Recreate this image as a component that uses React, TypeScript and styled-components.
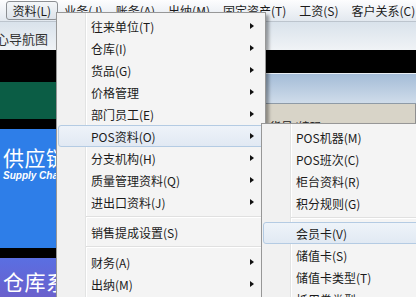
import React from 'react';
import styled, { createGlobalStyle } from 'styled-components';

const Global = createGlobalStyle`
  html, body { margin: 0; padding: 0; width: 416px; height: 297px; overflow: hidden; background: #ffffff; }
  body { font-family: "Noto Sans CJK SC", "Noto Sans", sans-serif; font-size: 12px; color: #1b1b1b; }
`;

const Screen = styled.div`
  position: relative;
  width: 416px;
  height: 297px;
  overflow: hidden;
  display: flex;
  flex-direction: column;
`;

const MenuBar = styled.div`
  height: 22px;
  flex: none;
  box-sizing: border-box;
  display: flex;
  align-items: center;
  padding-left: 6px;
  background: linear-gradient(#fdfdfe, #e2e8ef);
  border-bottom: 1px solid #bcc4cd;
  white-space: nowrap;
  overflow: hidden;
`;

const BarItem = styled.div<{ $open?: boolean }>`
  height: 19px;
  flex: none;
  box-sizing: border-box;
  padding: 0 5.5px;
  display: flex;
  align-items: center;
  white-space: nowrap;
  border: 1px solid ${(p) => (p.$open ? '#8c8f93' : 'transparent')};
  border-radius: 3px;
  background: ${(p) => (p.$open ? 'linear-gradient(#f4f6f8, #dde3ea)' : 'transparent')};
`;

const TitleBand = styled.div`
  height: 28px;
  flex: none;
  display: flex;
  align-items: center;
  padding-top: 4px;
  box-sizing: border-box;
  overflow: hidden;
  background: linear-gradient(#d9e2eb, #f0f3f6);
  font-size: 13px;
  color: #333;
  white-space: nowrap;
`;

const TitleText = styled.span`
  margin-left: -17px;
`;

const Body = styled.div`
  flex: 1;
  display: flex;
  min-height: 0;
`;

const Nav = styled.div`
  width: 170px;
  flex: none;
  background: #000;
  padding-top: 32px;
  display: flex;
  flex-direction: column;
  gap: 10px;
  box-sizing: border-box;
`;

const Tile = styled.div<{ $bg: string; $h?: number }>`
  ${(p) => (p.$h ? `height: ${p.$h}px; flex: none;` : 'flex: 1;')}
  background: ${(p) => p.$bg};
  color: #fff;
  padding-left: 3px;
  display: flex;
  flex-direction: column;
  overflow: hidden;
`;

const BigTitle = styled.div<{ $top: number }>`
  font-size: 21px;
  line-height: 24px;
  margin-top: ${(p) => p.$top}px;
  letter-spacing: 0.5px;
  white-space: nowrap;
`;

const SubTitle = styled.div`
  font-family: "Liberation Sans", Arial, sans-serif;
  font-style: italic;
  font-weight: bold;
  font-size: 10px;
  line-height: 12px;
  margin-top: 1px;
  white-space: nowrap;
`;

const Main = styled.div`
  flex: 1;
  display: flex;
  flex-direction: column;
  background: #fff;
`;

const BlackBand = styled.div`
  height: 23px;
  flex: none;
  background: #000;
  border-bottom: 1px solid #e8eef4;
`;

const SkyBand = styled.div`
  height: 29px;
  flex: none;
  background: linear-gradient(#a4bcd7, #cfdcea);
  border-bottom: 1px solid #8e9aa6;
`;

const GridHead = styled.div`
  height: 32px;
  flex: none;
  display: flex;
`;

const HeadCell = styled.div<{ $w?: number; $blank?: boolean }>`
  ${(p) => (p.$w ? `width: ${p.$w}px; flex: none;` : 'flex: 1;')}
  box-sizing: border-box;
  background: ${(p) => (p.$blank ? '#ffffff' : '#d8d4c8')};
  border-right: 1px solid #8f8f8f;
  border-left: 1px solid ${(p) => (p.$blank ? '#ffffff' : '#f4f2ec')};
  padding: 14px 0 0 12px;
  white-space: nowrap;
  color: #222;
`;

const Menu = styled.div<{ $left: number; $top: number; $w: number; $padTop: number }>`
  position: absolute;
  left: ${(p) => p.$left}px;
  top: ${(p) => p.$top}px;
  width: ${(p) => p.$w}px;
  height: 320px;
  box-sizing: border-box;
  border: 1px solid #979797;
  padding: ${(p) => p.$padTop}px 1px 0 1px;
  background: linear-gradient(to right, #f1f1f1 0 28px, #e2e3e3 28px 29px, #ffffff 29px 30px, #f4f4f4 30px);
  box-shadow: 3px 3px 3px rgba(0, 0, 0, 0.35);
`;

const Item = styled.div<{ $hot?: boolean }>`
  height: 22px;
  box-sizing: border-box;
  display: flex;
  align-items: center;
  padding-left: 32px;
  padding-right: 9px;
  white-space: nowrap;
  border: 1px solid ${(p) => (p.$hot ? '#b4cbe3' : 'transparent')};
  border-radius: 3px;
  background: ${(p) => (p.$hot ? 'linear-gradient(#eef3f9, #e1e9f3)' : 'transparent')};
`;

const Label = styled.span`
  flex: 1;
`;

const Arrow = styled.span`
  width: 0;
  height: 0;
  border-top: 3.5px solid transparent;
  border-bottom: 3.5px solid transparent;
  border-left: 4px solid #111;
`;

const Separator = styled.div`
  height: 8px;
  display: flex;
  align-items: center;
  padding-left: 28px;
  padding-right: 2px;
  &::after {
    content: '';
    flex: 1;
    height: 0;
    border-top: 1px solid #e0e0e0;
    border-bottom: 1px solid #ffffff;
  }
`;

type Entry = { label: string; sub?: boolean; hot?: boolean } | 'sep';

const mainItems: Entry[] = [
  { label: '往来单位(T)', sub: true },
  { label: '仓库(I)', sub: true },
  { label: '货品(G)', sub: true },
  { label: '价格管理', sub: true },
  { label: '部门员工(E)', sub: true },
  { label: 'POS资料(O)', sub: true, hot: true },
  { label: '分支机构(H)', sub: true },
  { label: '质量管理资料(Q)', sub: true },
  { label: '进出口资料(J)', sub: true },
  'sep',
  { label: '销售提成设置(S)' },
  'sep',
  { label: '财务(A)', sub: true },
  { label: '出纳(M)', sub: true },
];

const subItems: Entry[] = [
  { label: 'POS机器(M)' },
  { label: 'POS班次(C)' },
  { label: '柜台资料(R)' },
  { label: '积分规则(G)' },
  'sep',
  { label: '会员卡(V)', hot: true },
  { label: '储值卡(S)' },
  { label: '储值卡类型(T)' },
  { label: '抵用券类型' },
];

const renderItems = (list: Entry[]) =>
  list.map((e, i) =>
    e === 'sep' ? (
      <Separator key={i} />
    ) : (
      <Item key={i} $hot={e.hot}>
        <Label>{e.label}</Label>
        {e.sub && <Arrow />}
      </Item>
    )
  );

const barItems = ['资料(L)', '业务(J)', '账务(A)', '出纳(M)', '固定资产(T)', '工资(S)', '客户关系(C)'];

export default function App() {
  return (
    <>
      <Global />
      <Screen>
        <MenuBar>
          {barItems.map((t, i) => (
            <BarItem key={t} $open={i === 0}>
              {t}
            </BarItem>
          ))}
        </MenuBar>
        <TitleBand>
          <TitleText>中心导航图</TitleText>
        </TitleBand>
        <Body>
          <Nav>
            <Tile $bg="#0b5d45" $h={37} />
            <Tile $bg="#2e7ee8" $h={119}>
              <BigTitle $top={16}>供应链管理</BigTitle>
              <SubTitle>Supply Chain</SubTitle>
            </Tile>
            <Tile $bg="linear-gradient(#5a6fe2, #6a60cc)">
              <BigTitle $top={11}>仓库系统</BigTitle>
            </Tile>
          </Nav>
          <Main>
            <BlackBand />
            <SkyBand />
            <GridHead>
              <HeadCell $w={48} $blank />
              <HeadCell $w={38} />
              <HeadCell>货号/编码</HeadCell>
            </GridHead>
          </Main>
        </Body>
        <Menu $left={56} $top={12} $w={210} $padTop={2}>
          {renderItems(mainItems)}
        </Menu>
        <Menu $left={261} $top={123} $w={170} $padTop={2}>
          {renderItems(subItems)}
        </Menu>
      </Screen>
    </>
  );
}
